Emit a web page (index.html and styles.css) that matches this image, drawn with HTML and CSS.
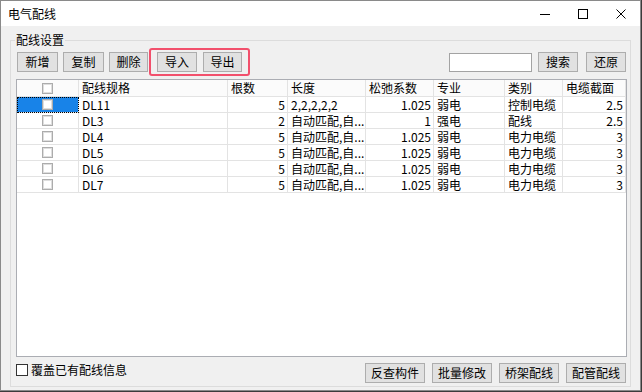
FILE: index.html
```html
<!DOCTYPE html>
<html lang="zh-CN">
<head>
<meta charset="utf-8">
<title>电气配线</title>
<link rel="stylesheet" href="styles.css">
</head>
<body>
<div class="window">
  <div class="titlebar">
    <span class="title">电气配线</span>
    <span class="ctl"><svg width="10" height="10" viewBox="0 0 10 10"><line x1="0" y1="5.5" x2="10" y2="5.5" stroke="#000" stroke-width="1"/></svg></span>
    <span class="ctl"><svg width="10" height="10" viewBox="0 0 10 10"><rect x="0.5" y="0.5" width="9" height="9" fill="none" stroke="#000" stroke-width="1"/></svg></span>
    <span class="ctl"><svg width="10" height="10" viewBox="0 0 10 10"><path d="M0.5 0.5 L9.5 9.5 M9.5 0.5 L0.5 9.5" stroke="#000" stroke-width="1" fill="none"/></svg></span>
  </div>
  <div class="client">
    <fieldset class="group">
      <legend>配线设置</legend>
      <div class="toolbar">
        <button class="btn w41">新增</button>
        <button class="btn w41">复制</button>
        <button class="btn w39">删除</button>
        <div class="mark">
          <button class="btn w40">导入</button>
          <button class="btn w39">导出</button>
        </div>
        <div class="spacer"></div>
        <input class="search" type="text">
        <button class="btn w40">搜索</button>
        <button class="btn w40 last">还原</button>
      </div>
      <div class="grid">
        <div class="row head">
          <div class="cell center"><span class="cb"></span></div>
          <div class="cell">配线规格</div>
          <div class="cell">根数</div>
          <div class="cell">长度</div>
          <div class="cell">松弛系数</div>
          <div class="cell">专业</div>
          <div class="cell">类别</div>
          <div class="cell">电缆截面</div>
        </div>
        <div class="row">
          <div class="cell center sel"><span class="cb"></span></div>
          <div class="cell">DL11</div>
          <div class="cell num">5</div>
          <div class="cell">2,2,2,2,2</div>
          <div class="cell num">1.025</div>
          <div class="cell">弱电</div>
          <div class="cell">控制电缆</div>
          <div class="cell num">2.5</div>
        </div>
        <div class="row">
          <div class="cell center"><span class="cb"></span></div>
          <div class="cell">DL3</div>
          <div class="cell num">2</div>
          <div class="cell">自动匹配,自...</div>
          <div class="cell num">1</div>
          <div class="cell">强电</div>
          <div class="cell">配线</div>
          <div class="cell num">2.5</div>
        </div>
        <div class="row">
          <div class="cell center"><span class="cb"></span></div>
          <div class="cell">DL4</div>
          <div class="cell num">5</div>
          <div class="cell">自动匹配,自...</div>
          <div class="cell num">1.025</div>
          <div class="cell">弱电</div>
          <div class="cell">电力电缆</div>
          <div class="cell num">3</div>
        </div>
        <div class="row">
          <div class="cell center"><span class="cb"></span></div>
          <div class="cell">DL5</div>
          <div class="cell num">5</div>
          <div class="cell">自动匹配,自...</div>
          <div class="cell num">1.025</div>
          <div class="cell">弱电</div>
          <div class="cell">电力电缆</div>
          <div class="cell num">3</div>
        </div>
        <div class="row">
          <div class="cell center"><span class="cb"></span></div>
          <div class="cell">DL6</div>
          <div class="cell num">5</div>
          <div class="cell">自动匹配,自...</div>
          <div class="cell num">1.025</div>
          <div class="cell">弱电</div>
          <div class="cell">电力电缆</div>
          <div class="cell num">3</div>
        </div>
        <div class="row">
          <div class="cell center"><span class="cb"></span></div>
          <div class="cell">DL7</div>
          <div class="cell num">5</div>
          <div class="cell">自动匹配,自...</div>
          <div class="cell num">1.025</div>
          <div class="cell">弱电</div>
          <div class="cell">电力电缆</div>
          <div class="cell num">3</div>
        </div>
      </div>
      <div class="footer">
        <label class="check"><span class="box"></span>覆盖已有配线信息</label>
        <div class="spacer"></div>
        <button class="btn w60">反查构件</button>
        <button class="btn w60">批量修改</button>
        <button class="btn w60">桥架配线</button>
        <button class="btn w60 last">配管配线</button>
      </div>
    </fieldset>
  </div>
</div>
</body>
</html>
```

FILE: styles.css
```css
* { box-sizing: border-box; }
html, body { margin: 0; padding: 0; }
body {
  width: 642px;
  height: 392px;
  overflow: hidden;
  background: #3b3b3b;
  font-family: "Noto Sans CJK SC", "Noto Sans", sans-serif;
  font-size: 12px;
  color: #000;
}
.window {
  width: 641px;
  height: 391px;
  border: 1px solid #8a8a8a;
  background: #f0f0f0;
  display: flex;
  flex-direction: column;
}
.titlebar {
  height: 25px;
  background: #fff;
  display: flex;
  align-items: center;
}
.title { flex: 1; padding-left: 7px; line-height: 16px; }
.ctl {
  width: 38px;
  height: 25px;
  display: flex;
  align-items: center;
  justify-content: center;
}
.ctl svg { display: block; }
.client {
  flex: 1;
  padding: 6px 9px 0 9px;
}
.group {
  margin: 0;
  padding: 0 3px 3px 5px;
  border: 1px solid #dcdcdc;
  min-width: 0;
}
.group legend {
  padding: 0 1px;
  margin-left: -1px;
  line-height: 16px;
  font-size: 12px;
}
.toolbar {
  margin-top: 4px;
  height: 20px;
  display: flex;
  align-items: center;
}
.spacer { flex: 1; }
.btn {
  height: 20px;
  padding: 0;
  border: 1px solid #adadad;
  background: #e1e1e1;
  font-family: inherit;
  font-size: 12px;
  line-height: 16px;
  color: #000;
  margin-right: 5px;
}
.toolbar .btn:first-child { margin-left: 1px; }
.btn.last { margin-right: 1px; }
.w39 { width: 39px; }
.w40 { width: 40px; }
.w41 { width: 41px; }
.w60 { width: 60px; margin-right: 7px; }
.mark {
  display: flex;
  align-items: center;
  margin: -4px 0 -4px -4px;
  padding: 2px 6px;
  border: 2px solid #f2506c;
  border-radius: 3px;
}
.mark .btn:first-child { margin-left: 0; margin-right: 6px; }
.mark .btn:last-child { margin-right: 0; }
.search {
  width: 83px;
  height: 19px;
  border: 1px solid #a3a3a3;
  background: #fff;
  margin: 0 6px 0 0;
  padding: 0;
}
.toolbar .search + .btn { margin-right: 8px; }
.grid {
  margin-top: 7px;
  height: 278px;
  border: 1px solid #abadb3;
  background: #fff;
}
.row {
  display: grid;
  grid-template-columns: 62px 149px 60px 78px 68px 71px 58px 63px;
  height: 16px;
}
.row.head { height: 17px; background: #fbfbfb; }
.cell {
  border-right: 1px solid #e3e3e3;
  border-bottom: 1px solid #e3e3e3;
  padding: 0 3px;
  line-height: 15px;
  white-space: nowrap;
  overflow: hidden;
}
.head .cell { line-height: 16px; }
.num { text-align: right; padding-right: 2px; }
.center { display: flex; align-items: center; justify-content: center; }
.sel {
  background: #1883e8;
  outline: 1px dotted #000;
  outline-offset: -1px;
}
.cb {
  width: 11px;
  height: 11px;
  border: 1px solid #acacac;
  background: #fff;
  box-shadow: inset 0 0 0 1px #dedede;
}
.footer {
  margin-top: 6px;
  height: 20px;
  display: flex;
  align-items: center;
}
.check {
  align-self: flex-start;
  display: flex;
  align-items: center;
  line-height: 14px;
  height: 14px;
  margin-top: 0;
}
.box {
  width: 12px;
  height: 12px;
  border: 1px solid #333;
  background: #fff;
  margin-right: 3px;
}
```
